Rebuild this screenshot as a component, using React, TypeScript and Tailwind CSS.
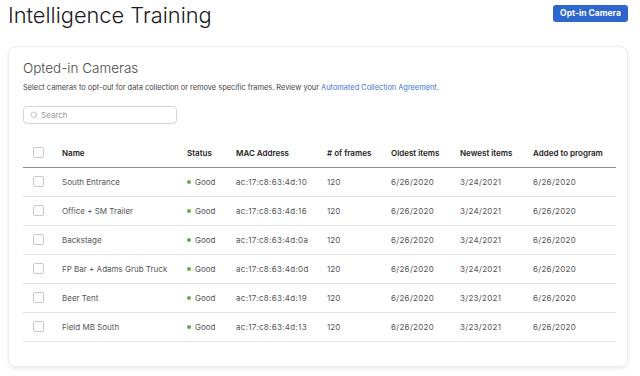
import { Search } from "lucide-react";

const cameras = [
  { name: "South Entrance", mac: "ac:17:c8:63:4d:10", newest: "3/24/2021" },
  { name: "Office + SM Trailer", mac: "ac:17:c8:63:4d:16", newest: "3/24/2021" },
  { name: "Backstage", mac: "ac:17:c8:63:4d:0a", newest: "3/24/2021" },
  { name: "FP Bar + Adams Grub Truck", mac: "ac:17:c8:63:4d:0d", newest: "3/24/2021" },
  { name: "Beer Tent", mac: "ac:17:c8:63:4d:19", newest: "3/23/2021" },
  { name: "Field MB South", mac: "ac:17:c8:63:4d:13", newest: "3/23/2021" },
];

const Checkbox = () => (
  <div className="w-[11px] h-[11px] rounded-[2px] border border-[#c9c9c9] bg-white"></div>
);

const App = () => {
  return (
    <div className="w-[640px] h-[376px] bg-white overflow-hidden font-['Inter',sans-serif]">

      {/* HEADER */}
      <div className="flex items-start justify-between pl-2 pr-3">
        <h1 className="text-[21.8px] leading-[30px] font-light text-[#1a1a1a]">
          Intelligence Training
        </h1>
        <button className="mt-[5px] h-[17px] w-[75px] rounded-[3px] bg-[#2d66cc] text-white text-[8.5px] font-bold">
          Opt-in Camera
        </button>
      </div>

      {/* CARD */}
      <div className="mt-4 ml-2 mr-3 rounded-[8px] border border-[#ececec] shadow-[0_2px_4px_rgba(0,0,0,0.08)] px-[14px] pt-[12px] pb-[24px]">

        <h2 className="text-[13.5px] leading-[18px] font-light text-[#4a4a4a]">
          Opted-in Cameras
        </h2>

        <p className="mt-[5px] text-[7.4px] leading-[12px] text-[#444]">
          Select cameras to opt-out for data collection or remove specific frames. Review your{" "}
          <span className="text-[#3f74cf]">Automated Collection Agreement</span>.
        </p>

        {/* SEARCH */}
        <div className="mt-[12px] w-[154px] h-[18px] rounded-[4px] border border-[#d4d4d4] flex items-center gap-[3px] px-[6px]">
          <Search size={8} strokeWidth={1.6} className="text-[#999]" />
          <span className="text-[8px] text-[#999]">Search</span>
        </div>

        {/* TABLE */}
        <table className="mt-[15px] table-fixed border-collapse w-[593px]">
          <colgroup>
            <col className="w-[39px]" />
            <col className="w-[125px]" />
            <col className="w-[49px]" />
            <col className="w-[91px]" />
            <col className="w-[64px]" />
            <col className="w-[69px]" />
            <col className="w-[73px]" />
            <col className="w-[83px]" />
          </colgroup>
          <thead>
            <tr className="h-[28px] border-b border-[#8c8c8c] text-left text-[8px] text-[#222]">
              <th className="pl-[10px]"><Checkbox /></th>
              <th className="font-semibold">Name</th>
              <th className="font-semibold">Status</th>
              <th className="font-semibold">MAC Address</th>
              <th className="font-semibold"># of frames</th>
              <th className="font-semibold">Oldest items</th>
              <th className="font-semibold">Newest items</th>
              <th className="font-semibold">Added to program</th>
            </tr>
          </thead>
          <tbody>
            {cameras.map((cam) => (
              <tr key={cam.mac} className="h-[29px] border-b border-[#e4e4e4] text-[8px] text-[#555]">
                <td className="pl-[10px]"><Checkbox /></td>
                <td>{cam.name}</td>
                <td>
                  <div className="flex items-center gap-[4px]">
                    <span className="w-[4px] h-[4px] rounded-full bg-[#6aa84f]"></span>
                    Good
                  </div>
                </td>
                <td className="tracking-[0.3px]">{cam.mac}</td>
                <td>120</td>
                <td className="tracking-[0.3px]">6/26/2020</td>
                <td className="tracking-[0.3px]">{cam.newest}</td>
                <td className="tracking-[0.3px]">6/26/2020</td>
              </tr>
            ))}
          </tbody>
        </table>

      </div>

    </div>
  );
};

export default App;
